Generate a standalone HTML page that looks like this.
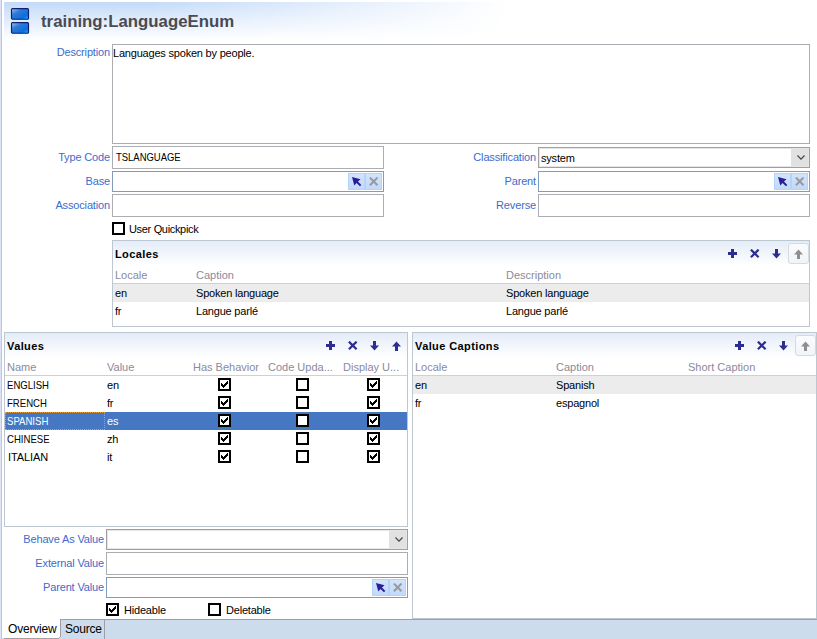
<!DOCTYPE html>
<html><head><meta charset="utf-8">
<style>
html,body{margin:0;padding:0;}
body{width:817px;height:639px;overflow:hidden;position:relative;background:#fff;font-family:"Liberation Sans",sans-serif;font-size:11px;}
.a{position:absolute;}
.t{position:absolute;font-size:11px;line-height:13px;white-space:pre;color:#000;letter-spacing:-0.2px;}
.l{position:absolute;font-size:11px;line-height:13px;white-space:pre;color:#3d6ccc;text-align:right;letter-spacing:-0.15px;}
.h{position:absolute;font-size:11px;line-height:13px;white-space:pre;color:#8a8a9c;}
.b{position:absolute;font-size:11px;line-height:13px;white-space:pre;color:#000;font-weight:bold;letter-spacing:0.4px;}
.box{position:absolute;box-sizing:border-box;border:1px solid #abadb3;background:#fff;}
.fbox{position:absolute;box-sizing:border-box;border:1px solid #7f9db9;background:#fff;}
.sec{position:absolute;box-sizing:border-box;border:1px solid #bdc7d0;background:#fff;}
.sech{position:absolute;left:0;top:0;right:0;height:25px;background:linear-gradient(#e4ecf8,#ffffff);}
.lk{position:absolute;width:34px;height:17px;}
.lkb{position:absolute;top:0;width:17px;height:17px;box-sizing:border-box;border:1px solid #b4d2fa;background:linear-gradient(#d2e4fd,#c2d9fa);}
.lk svg{position:absolute;}
.tb{position:absolute;}
.ub{position:absolute;box-sizing:border-box;width:21px;height:21px;border:1px solid #d3dae2;border-radius:3px;background:linear-gradient(#fafbfd,#f1f4f8);}
.cb{position:absolute;box-sizing:border-box;width:13px;height:13px;border:2px solid #000;background:#fff;}
.sep{position:absolute;height:1px;background:#cad2d9;}
.row{position:absolute;height:18px;background:#ececec;}
</style></head><body>
<svg width="0" height="0" style="position:absolute">
<defs>
<symbol id="ptr" viewBox="0 0 10 10"><polygon points="0,0 8.5,2.3 6,4.6 9.3,7.9 7.9,9.3 4.6,6 2.3,8.5" fill="#2a1f95"/></symbol>
<symbol id="clr" viewBox="0 0 10 10"><path d="M0.9,0.6 L8.5,8.2 M8.5,0.6 L0.9,8.2" stroke="#9a9a9a" stroke-width="2.1" fill="none"/></symbol>
<symbol id="plus" viewBox="0 0 9 9"><path d="M3,0h3v3h3v3h-3v3h-3v-3h-3v-3h3z" fill="#2d2d8f"/></symbol>
<symbol id="del" viewBox="0 0 10 10"><path d="M0.9,0.6 L8.6,8.3 M8.6,0.6 L0.9,8.3" stroke="#2d2d8f" stroke-width="2.2" fill="none"/></symbol>
<symbol id="down" viewBox="0 0 9 10"><path d="M3,0h3v4.5h3l-4.5,5l-4.5,-5h3z" fill="#2d2d8f"/></symbol>
<symbol id="up" viewBox="0 0 9 10"><path d="M3,10h3v-4.5h3l-4.5,-5l-4.5,5h3z" fill="#2d2d8f"/></symbol>
<symbol id="upg" viewBox="0 0 9 10"><path d="M3,10h3v-4.5h3l-4.5,-5l-4.5,5h3z" fill="#8e8e8e"/></symbol>
<symbol id="chk" viewBox="0 0 13 13"><g fill="#000" shape-rendering="crispEdges"><rect x="9" y="3" width="1" height="1"/><rect x="8" y="4" width="2" height="1"/><rect x="3" y="5" width="1" height="1"/><rect x="7" y="5" width="3" height="1"/><rect x="3" y="6" width="2" height="1"/><rect x="6" y="6" width="3" height="1"/><rect x="3" y="7" width="5" height="1"/><rect x="4" y="8" width="3" height="1"/><rect x="5" y="9" width="1" height="1"/></g></symbol>
<symbol id="chev" viewBox="0 0 8 5"><path d="M0.5,0.5 L4,4.2 L7.5,0.5" stroke="#404040" stroke-width="1.1" fill="none"/></symbol>
</defs></svg>

<!-- frame left border -->
<div class="a" style="left:0;top:0;width:1px;height:639px;background:#dde2f4"></div>
<div class="a" style="left:1px;top:0;width:1px;height:639px;background:#c6c6c8"></div>

<!-- header gradient -->
<div class="a" style="left:4px;top:2px;width:813px;height:38px;background:linear-gradient(to right,rgba(255,255,255,0) 0%,rgba(255,255,255,0) 18%,#fff 62%),linear-gradient(#c3daf9,#ffffff)"></div>

<!-- icon -->
<svg class="a" style="left:10px;top:7px" width="21" height="28" viewBox="0 0 21 28">
 <defs><linearGradient id="ig" x1="0" y1="0" x2="1" y2="1"><stop offset="0" stop-color="#a8c4ec"/><stop offset="0.35" stop-color="#2f7ad6"/><stop offset="0.75" stop-color="#0b6fdc"/><stop offset="1" stop-color="#14b4ff"/></linearGradient></defs>
 <rect x="1.5" y="1.6" width="17" height="10.6" rx="1" fill="url(#ig)" stroke="#0a1f78" stroke-width="1.15"/>
 <rect x="1.5" y="15.6" width="17" height="10.6" rx="1" fill="url(#ig)" stroke="#0a1f78" stroke-width="1.15"/>
</svg>

<!-- title -->
<div class="a" style="left:41px;top:12px;font-size:16px;line-height:20px;font-weight:bold;color:#4a4a50;white-space:pre;transform:scaleX(1.05);transform-origin:0 0">training:LanguageEnum</div>

<!-- Description -->
<div class="l" style="right:707px;top:46px">Description</div>
<div class="box" style="left:112px;top:44px;width:698px;height:100px"></div>
<div class="t" style="left:113px;top:47px;letter-spacing:-0.2px">Languages spoken by people.</div>

<!-- Type Code -->
<div class="l" style="right:707px;top:151px">Type Code</div>
<div class="box" style="left:112px;top:146px;width:272px;height:23px"></div>
<div class="t" style="left:116px;top:151px;letter-spacing:0;transform:scaleX(0.86);transform-origin:0 0">TSLANGUAGE</div>

<!-- Base -->
<div class="l" style="right:707px;top:175px">Base</div>
<div class="fbox" style="left:112px;top:171px;width:272px;height:21px"></div>
<div class="lk" style="left:348px;top:173px"><div class="lkb" style="left:0"></div><div class="lkb" style="left:17px"></div><svg style="left:4px;top:4px" width="10" height="10"><use href="#ptr"/></svg><svg style="left:21px;top:4px" width="10" height="10"><use href="#clr"/></svg></div>

<!-- Association -->
<div class="l" style="right:707px;top:199px">Association</div>
<div class="box" style="left:112px;top:194px;width:272px;height:23px"></div>

<!-- User Quickpick -->
<div class="cb" style="left:112px;top:222px"></div>
<div class="t" style="left:129px;top:223px;letter-spacing:-0.33px">User Quickpick</div>

<!-- Classification -->
<div class="l" style="right:281px;top:151px">Classification</div>
<div class="box" style="left:538px;top:147px;width:272px;height:21px;border-color:#9f9f9f"></div>
<div class="a" style="left:539px;top:148px;width:270px;height:19px;box-sizing:border-box;border:1px solid #e6e6e6"></div>
<div class="a" style="left:791px;top:149px;width:17px;height:17px;background:#e1e1e1"></div><svg class="a" style="left:797px;top:155px" width="8" height="5"><use href="#chev"/></svg>
<div class="t" style="left:541px;top:152px">system</div>

<!-- Parent -->
<div class="l" style="right:281px;top:175px">Parent</div>
<div class="fbox" style="left:538px;top:171px;width:272px;height:21px"></div>
<div class="lk" style="left:774px;top:173px"><div class="lkb" style="left:0"></div><div class="lkb" style="left:17px"></div><svg style="left:4px;top:4px" width="10" height="10"><use href="#ptr"/></svg><svg style="left:21px;top:4px" width="10" height="10"><use href="#clr"/></svg></div>

<!-- Reverse -->
<div class="l" style="right:281px;top:199px">Reverse</div>
<div class="box" style="left:538px;top:194px;width:272px;height:23px"></div>

<!-- Locales section -->
<div class="sec" style="left:112px;top:240px;width:698px;height:87px;overflow:hidden">
 <div class="sech"></div>
</div>
<div class="b" style="left:115px;top:248px">Locales</div>
<svg class="tb" style="left:728px;top:249px" width="9" height="9"><use href="#plus"/></svg><svg class="tb" style="left:750px;top:249px" width="10" height="10"><use href="#del"/></svg><svg class="tb" style="left:772px;top:249px" width="9" height="10"><use href="#down"/></svg><div class="ub" style="left:788px;top:243px"></div><svg class="tb" style="left:794px;top:249px" width="9" height="10"><use href="#upg"/></svg>
<div class="h" style="left:115px;top:269px">Locale</div>
<div class="h" style="left:196px;top:269px">Caption</div>
<div class="h" style="left:506px;top:269px">Description</div>
<div class="sep" style="left:113px;top:283px;width:696px"></div>
<div class="row" style="left:113px;top:284px;width:696px"></div>
<div class="t" style="left:115px;top:287px">en</div>
<div class="t" style="left:196px;top:287px">Spoken language</div>
<div class="t" style="left:506px;top:287px">Spoken language</div>
<div class="t" style="left:115px;top:305px">fr</div>
<div class="t" style="left:196px;top:305px">Langue parlé</div>
<div class="t" style="left:506px;top:305px">Langue parlé</div>

<!-- Values section -->
<div class="sec" style="left:4px;top:332px;width:404px;height:195px;overflow:hidden">
 <div class="sech"></div>
</div>
<div class="b" style="left:7px;top:340px">Values</div>
<svg class="tb" style="left:326px;top:341px" width="9" height="9"><use href="#plus"/></svg><svg class="tb" style="left:348px;top:341px" width="10" height="10"><use href="#del"/></svg><svg class="tb" style="left:370px;top:341px" width="9" height="10"><use href="#down"/></svg><svg class="tb" style="left:392px;top:341px" width="9" height="10"><use href="#up"/></svg>
<div class="h" style="left:7px;top:361px">Name</div>
<div class="h" style="left:107px;top:361px">Value</div>
<div class="h" style="left:193px;top:361px">Has Behavior</div>
<div class="h" style="left:268px;top:361px">Code Upda...</div>
<div class="h" style="left:343px;top:361px">Display U...</div>
<div class="sep" style="left:5px;top:375px;width:402px"></div>
<div class="a" style="left:5px;top:412px;width:402px;height:18px;background:#4677c2"></div>
<div class="t" style="left:7px;top:379px;letter-spacing:0;transform:scaleX(0.87);transform-origin:0 0">ENGLISH</div><div class="t" style="left:107px;top:379px">en</div>
<div class="t" style="left:7px;top:397px;letter-spacing:0;transform:scaleX(0.87);transform-origin:0 0">FRENCH</div><div class="t" style="left:107px;top:397px">fr</div>
<div class="a" style="left:5px;top:412px;width:100px;height:18px;box-sizing:border-box;border:1px dotted #e09a3a"></div><div class="t" style="left:7px;top:415px;color:#fff;letter-spacing:0;transform:scaleX(0.87);transform-origin:0 0">SPANISH</div><div class="t" style="left:107px;top:415px;color:#fff">es</div>
<div class="t" style="left:7px;top:433px;letter-spacing:0;transform:scaleX(0.87);transform-origin:0 0">CHINESE</div><div class="t" style="left:107px;top:433px">zh</div>
<div class="t" style="left:8px;top:451px;letter-spacing:-0.1px">ITALIAN</div><div class="t" style="left:107px;top:451px">it</div>

<div class="cb" style="left:218px;top:378px"><svg style="position:absolute;left:-2px;top:-2px" width="13" height="13"><use href="#chk"/></svg></div><div class="cb" style="left:296px;top:378px"></div><div class="cb" style="left:367px;top:378px"><svg style="position:absolute;left:-2px;top:-2px" width="13" height="13"><use href="#chk"/></svg></div>
<div class="cb" style="left:218px;top:396px"><svg style="position:absolute;left:-2px;top:-2px" width="13" height="13"><use href="#chk"/></svg></div><div class="cb" style="left:296px;top:396px"></div><div class="cb" style="left:367px;top:396px"><svg style="position:absolute;left:-2px;top:-2px" width="13" height="13"><use href="#chk"/></svg></div>
<div class="cb" style="left:218px;top:414px"><svg style="position:absolute;left:-2px;top:-2px" width="13" height="13"><use href="#chk"/></svg></div><div class="cb" style="left:296px;top:414px"></div><div class="cb" style="left:367px;top:414px"><svg style="position:absolute;left:-2px;top:-2px" width="13" height="13"><use href="#chk"/></svg></div>
<div class="cb" style="left:218px;top:432px"><svg style="position:absolute;left:-2px;top:-2px" width="13" height="13"><use href="#chk"/></svg></div><div class="cb" style="left:296px;top:432px"></div><div class="cb" style="left:367px;top:432px"><svg style="position:absolute;left:-2px;top:-2px" width="13" height="13"><use href="#chk"/></svg></div>
<div class="cb" style="left:218px;top:450px"><svg style="position:absolute;left:-2px;top:-2px" width="13" height="13"><use href="#chk"/></svg></div><div class="cb" style="left:296px;top:450px"></div><div class="cb" style="left:367px;top:450px"><svg style="position:absolute;left:-2px;top:-2px" width="13" height="13"><use href="#chk"/></svg></div>

<!-- Value Captions section -->
<div class="sec" style="left:412px;top:332px;width:405px;height:287px;overflow:hidden">
 <div class="sech"></div>
</div>
<div class="b" style="left:415px;top:340px">Value Captions</div>
<svg class="tb" style="left:735px;top:341px" width="9" height="9"><use href="#plus"/></svg><svg class="tb" style="left:757px;top:341px" width="10" height="10"><use href="#del"/></svg><svg class="tb" style="left:779px;top:341px" width="9" height="10"><use href="#down"/></svg><div class="ub" style="left:795px;top:335px"></div><svg class="tb" style="left:801px;top:341px" width="9" height="10"><use href="#upg"/></svg>
<div class="h" style="left:415px;top:361px">Locale</div>
<div class="h" style="left:556px;top:361px">Caption</div>
<div class="h" style="left:688px;top:361px">Short Caption</div>
<div class="sep" style="left:413px;top:375px;width:403px"></div>
<div class="row" style="left:413px;top:376px;width:403px"></div>
<div class="t" style="left:415px;top:379px">en</div><div class="t" style="left:556px;top:379px">Spanish</div>
<div class="t" style="left:415px;top:397px">fr</div><div class="t" style="left:556px;top:397px">espagnol</div>

<!-- bottom fields -->
<div class="l" style="right:713px;top:533px">Behave As Value</div>
<div class="box" style="left:106px;top:529px;width:302px;height:21px;border-color:#9f9f9f"></div>
<div class="a" style="left:107px;top:530px;width:300px;height:19px;box-sizing:border-box;border:1px solid #e6e6e6"></div>
<div class="a" style="left:389px;top:531px;width:17px;height:17px;background:#e1e1e1"></div><svg class="a" style="left:395px;top:537px" width="8" height="5"><use href="#chev"/></svg>

<div class="l" style="right:713px;top:557px">External Value</div>
<div class="box" style="left:106px;top:552px;width:302px;height:23px"></div>

<div class="l" style="right:713px;top:581px">Parent Value</div>
<div class="fbox" style="left:106px;top:577px;width:302px;height:21px"></div>
<div class="lk" style="left:372px;top:579px"><div class="lkb" style="left:0"></div><div class="lkb" style="left:17px"></div><svg style="left:4px;top:4px" width="10" height="10"><use href="#ptr"/></svg><svg style="left:21px;top:4px" width="10" height="10"><use href="#clr"/></svg></div>

<div class="cb" style="left:106px;top:603px"><svg style="position:absolute;left:-2px;top:-2px" width="13" height="13"><use href="#chk"/></svg></div>
<div class="t" style="left:124px;top:604px">Hideable</div>
<div class="cb" style="left:208px;top:603px"></div>
<div class="t" style="left:226px;top:604px">Deletable</div>

<!-- tab bar -->
<div class="a" style="left:2px;top:619px;width:815px;height:1px;background:#a0a0a0"></div>
<div class="a" style="left:2px;top:620px;width:815px;height:19px;background:#cddcec"></div>
<div class="a" style="left:2px;top:619px;width:58px;height:19px;background:#fff"></div>
<div class="a" style="left:60px;top:619px;width:1px;height:18px;background:#a0a0a0"></div><div class="a" style="left:59px;top:637px;width:1px;height:1px;background:#a8a8a8"></div>
<div class="a" style="left:4px;top:638px;width:55px;height:1px;background:#a0a0a0"></div>
<div class="a" style="left:104px;top:620px;width:1px;height:19px;background:#a0a0a0"></div>
<div class="t" style="left:8px;top:622px;font-size:12px;line-height:14px">Overview</div>
<div class="t" style="left:65px;top:622px;font-size:12px;line-height:14px">Source</div>

</body></html>
